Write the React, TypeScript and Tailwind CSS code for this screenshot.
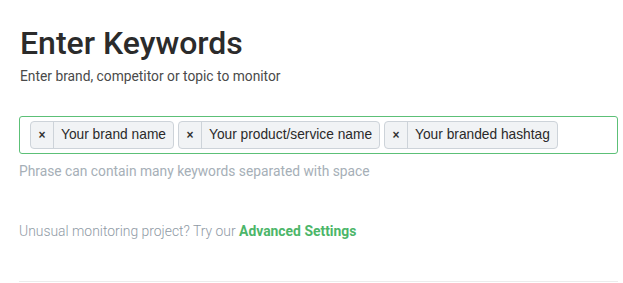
import React from "react";

const tags = ["Your brand name", "Your product/service name", "Your branded hashtag"];

export default function App() {
  return (
    <div className="w-[623px] h-[283px] bg-white overflow-hidden" style={{ fontFamily: "Roboto, sans-serif" }}>
      <div className="pl-[19px] pr-[5px] pt-[24px]">
        <h1 className="text-[32px] leading-[38px] font-medium text-[#2b2b2b] pl-px">Enter Keywords</h1>
        <p className="text-[13.8px] leading-[18px] text-[#4a4a4a] mt-[5px] pl-px">Enter brand, competitor or topic to monitor</p>
        <div className="mt-[31px] h-[38px] border border-[#5cc077] rounded-[3px] flex items-center gap-[4px] pl-[10px]">
          {tags.map((t) => (
            <div
              key={t}
              className="flex items-stretch h-[28px] border border-[#cdd3d9] bg-[#f1f3f5] rounded-[4px] text-[13.75px] text-[#2a2a2a]"
              style={{ fontFamily: '"Liberation Sans", Arial, sans-serif' }}
            >
              <span className="w-[23px] flex items-center justify-center border-r border-[#cdd3d9] text-[12px] font-bold text-[#333]">×</span>
              <span className="pl-[7px] pr-[7px] flex items-center">{t}</span>
            </div>
          ))}
        </div>
        <p className="mt-[8px] text-[13.8px] leading-[18px] text-[#a6afb7]">Phrase can contain many keywords separated with space</p>
        <p className="mt-[42px] text-[13.9px] leading-[18px] text-[#8f9aa5] font-light">
          Unusual monitoring project? Try our <span className="font-bold text-[#4cb669]">Advanced Settings</span>
        </p>
        <div className="mt-[41px] border-t border-[#ececec]" />
      </div>
    </div>
  );
}
